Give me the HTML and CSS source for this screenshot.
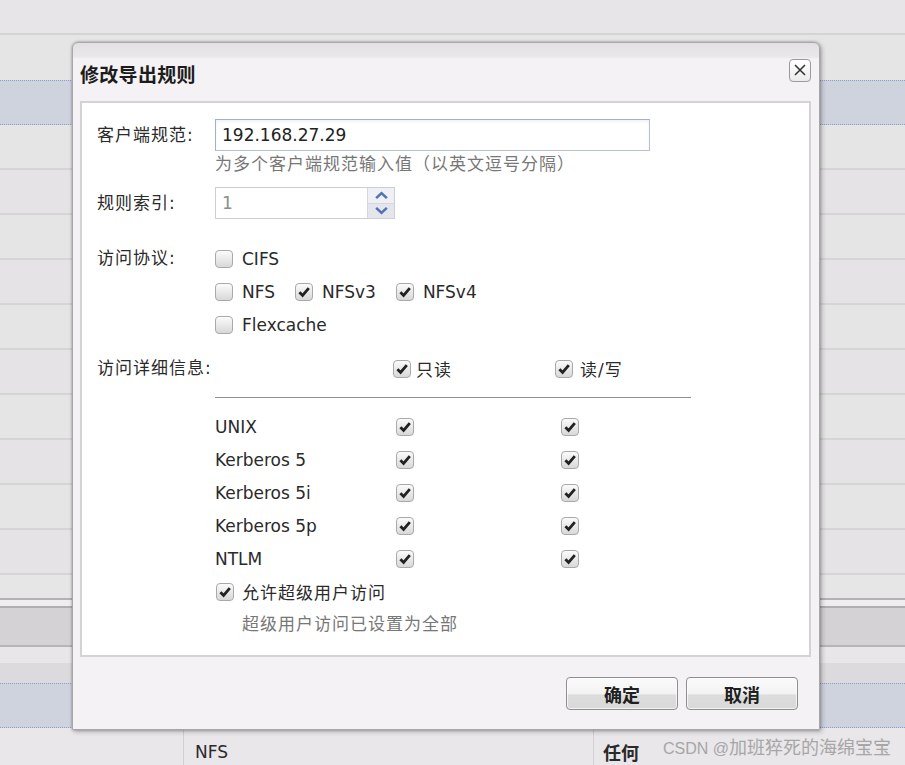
FILE: index.html
```html
<!DOCTYPE html>
<html lang="zh-CN">
<head>
<meta charset="utf-8">
<title>修改导出规则</title>
<link rel="stylesheet" href="styles.css">
</head>
<body>
<div class="bg">
  <div class="bg-head"></div>
  <div class="bg-row first"></div>
  <div class="bg-row sel"></div>
  <div class="bg-row"></div>
  <div class="bg-row alt"></div>
  <div class="bg-row"></div>
  <div class="bg-row alt"></div>
  <div class="bg-row"></div>
  <div class="bg-row alt"></div>
  <div class="bg-row"></div>
  <div class="bg-row alt"></div>
  <div class="bg-row"></div>
  <div class="bg-row alt"></div>
  <div class="bg-part"></div>
  <div class="bg-strip"></div>
  <div class="bg-tool"></div>
  <div class="bg-a"></div>
  <div class="bg-b"></div>
  <div class="bg-row sel"></div>
  <div class="bg-foot">
    <div class="c1"></div>
    <div class="c2">NFS</div>
    <div class="c3">任何</div>
  </div>
</div>

<div class="dialog">
  <div class="dlg-title">
    <h1>修改导出规则</h1>
    <span class="close"><svg viewBox="0 0 22 22"><path d="M5.5 5.5L16.5 16.5M16.5 5.5L5.5 16.5"/></svg></span>
  </div>
  <div class="panel">
    <div class="frow client">
      <div class="lbl">客户端规范:</div>
      <div class="ctl">
        <div class="text-in">192.168.27.29</div>
        <div class="hint">为多个客户端规范输入值（以英文逗号分隔）</div>
      </div>
    </div>
    <div class="frow idx">
      <div class="lbl">规则索引:</div>
      <div class="spin">
        <div class="spin-in">1</div>
        <div class="spin-btns">
          <span class="up"><svg viewBox="0 0 14 10"><path d="M2 7.5L7 2.8L12 7.5"/></svg></span>
          <span class="dn"><svg viewBox="0 0 14 10"><path d="M2 2.5L7 7.2L12 2.5"/></svg></span>
        </div>
      </div>
    </div>
    <div class="frow proto">
      <div class="lbl">访问协议:</div>
      <div class="ctl">
        <div class="cbline"><span class="chk"><span class="cb"></span>CIFS</span></div>
        <div class="cbline">
          <span class="chk"><span class="cb"></span>NFS</span>
          <span class="chk"><span class="cb"><svg viewBox="0 0 14 14"><path d="M2.4 7.2L5.6 10.4L11.8 3.2"/></svg></span>NFSv3</span>
          <span class="chk"><span class="cb"><svg viewBox="0 0 14 14"><path d="M2.4 7.2L5.6 10.4L11.8 3.2"/></svg></span>NFSv4</span>
        </div>
        <div class="cbline"><span class="chk"><span class="cb"></span>Flexcache</span></div>
      </div>
    </div>
    <div class="frow detail">
      <div class="lbl">访问详细信息:</div>
      <div></div>
      <span class="chk ro"><span class="cb"><svg viewBox="0 0 14 14"><path d="M2.4 7.2L5.6 10.4L11.8 3.2"/></svg></span><span class="zh">只读</span></span>
      <span class="chk rw"><span class="cb"><svg viewBox="0 0 14 14"><path d="M2.4 7.2L5.6 10.4L11.8 3.2"/></svg></span><span class="zh">读/写</span></span>
    </div>
    <div class="rule"></div>
    <div class="auth">
      <div class="arow"><span>UNIX</span><span class="cb"><svg viewBox="0 0 14 14"><path d="M2.4 7.2L5.6 10.4L11.8 3.2"/></svg></span><span class="cb"><svg viewBox="0 0 14 14"><path d="M2.4 7.2L5.6 10.4L11.8 3.2"/></svg></span></div>
      <div class="arow"><span>Kerberos 5</span><span class="cb"><svg viewBox="0 0 14 14"><path d="M2.4 7.2L5.6 10.4L11.8 3.2"/></svg></span><span class="cb"><svg viewBox="0 0 14 14"><path d="M2.4 7.2L5.6 10.4L11.8 3.2"/></svg></span></div>
      <div class="arow"><span>Kerberos 5i</span><span class="cb"><svg viewBox="0 0 14 14"><path d="M2.4 7.2L5.6 10.4L11.8 3.2"/></svg></span><span class="cb"><svg viewBox="0 0 14 14"><path d="M2.4 7.2L5.6 10.4L11.8 3.2"/></svg></span></div>
      <div class="arow"><span>Kerberos 5p</span><span class="cb"><svg viewBox="0 0 14 14"><path d="M2.4 7.2L5.6 10.4L11.8 3.2"/></svg></span><span class="cb"><svg viewBox="0 0 14 14"><path d="M2.4 7.2L5.6 10.4L11.8 3.2"/></svg></span></div>
      <div class="arow"><span>NTLM</span><span class="cb"><svg viewBox="0 0 14 14"><path d="M2.4 7.2L5.6 10.4L11.8 3.2"/></svg></span><span class="cb"><svg viewBox="0 0 14 14"><path d="M2.4 7.2L5.6 10.4L11.8 3.2"/></svg></span></div>
    </div>
    <div class="su">
      <span class="chk"><span class="cb"><svg viewBox="0 0 14 14"><path d="M2.4 7.2L5.6 10.4L11.8 3.2"/></svg></span><span class="zh">允许超级用户访问</span></span>
      <div class="hint">超级用户访问已设置为全部</div>
    </div>
  </div>
  <div class="dlg-foot">
    <span class="btn">确定</span>
    <span class="btn">取消</span>
  </div>
</div>

<div class="wm">CSDN @<span>加班猝死的海绵宝宝</span></div>
</body>
</html>
```
FILE: styles.css
```css
* { box-sizing: border-box; margin: 0; padding: 0; }
html, body { width: 905px; height: 765px; overflow: hidden; }
body {
  position: relative;
  background: #e7e5e7;
  font-family: "DejaVu Sans", "Noto Sans CJK SC", sans-serif;
  font-size: 17px;
  color: #2a2a2a;
}

/* background page */
.bg-head { height: 35px; background: #e8e5e8; border-bottom: 2px solid #d5d4d5; }
.bg-row { height: 45px; background: #e6e5e6; border-bottom: 2px solid #d6d5d6; }
.bg-row.alt { background: #e6e3e6; }
.bg-row.first { border-bottom: none; }
.bg-row.sel { background: #cfd3de; border-top: 1px dotted #8c9ed0; border-bottom: 1px dotted #8c9ed0; }
.bg-part { height: 25px; background: #e7e6e7; border-bottom: 2px solid #b3b2b3; }
.bg-strip { height: 8px; background: #efedef; border-bottom: 2px solid #b0afb0; }
.bg-tool { height: 39px; background: #d4d2d4; border-bottom: 2px solid #b7b6b7; }
.bg-a { height: 16px; background: #e8e6e8; }
.bg-b { height: 20px; background: #dcdadd; }
.bg-foot { height: 37px; background: #e9e7e9; display: flex; }
.bg-foot .c1 { width: 184px; border-right: 1px solid #d2d0d2; }
.bg-foot .c2 { width: 410px; border-right: 1px solid #d2d0d2; padding: 13px 0 0 11px; line-height: 22px; }
.bg-foot .c3 { padding: 13px 0 0 9px; line-height: 22px; font-family: "Noto Sans CJK SC", sans-serif; font-weight: bold; font-size: 18px; }

/* dialog */
.dialog {
  position: absolute;
  left: 72px;
  top: 42px;
  width: 748px;
  height: 688px;
  border: 1px solid #a9a7a9;
  border-radius: 6px 6px 0 0;
  background: linear-gradient(#e2e0e3, #eae8eb 14px, #f5f2f5 16px, #f5f2f5);
  box-shadow: 0 0 3px rgba(0,0,0,.35), 2px 2px 5px rgba(0,0,0,.22);
  padding: 0 8px 0 7px;
  display: flex;
  flex-direction: column;
}
.dlg-title {
  height: 58px;
  flex: none;
  display: flex;
  align-items: center;
  justify-content: space-between;
}
.dlg-title h1 {
  font-family: "Noto Sans CJK SC", sans-serif;
  font-size: 19px;
  font-weight: bold;
  letter-spacing: 0.3px;
  color: #1c1c1c;
  margin-top: 3px;
}
.close {
  width: 22px;
  height: 23px;
  margin-top: -4px;
  border: 1px solid #9b9b9b;
  border-radius: 4px;
  background: linear-gradient(#ffffff, #ebebeb);
  display: flex;
  align-items: center;
  justify-content: center;
}
.close svg { width: 20px; height: 20px; }
.close path { fill: none; stroke: #333; stroke-width: 1.7; }

.panel {
  height: 556px;
  flex: none;
  background: #fff;
  border: 2px solid #d4d2d4;
  padding: 16px 0 0 15px;
}
.frow { display: flex; }
.lbl { width: 118px; flex: none; letter-spacing: 1px; line-height: 33px; }
.client .lbl { line-height: 32px; }
.text-in {
  width: 435px;
  height: 32px;
  border: 1px solid #b7bfd4;
  border-top-color: #a3aec8;
  border-left-color: #a3aec8;
  box-shadow: inset 0 2px 3px rgba(0,0,0,.05);
  padding-left: 6px;
  line-height: 30px;
  color: #222;
}
.hint { line-height: 26px; color: #777; letter-spacing: 1px; }

.idx { margin-top: 10px; }
.idx .lbl { line-height: 32px; }
.spin { display: flex; width: 180px; height: 32px; border: 1px solid #cbcfd9; }
.spin-in { flex: 1; padding-left: 6px; line-height: 30px; color: #8e8e8e; border-right: 1px solid #d5d8e1; }
.spin-btns { width: 26px; display: flex; flex-direction: column; }
.spin-btns span { flex: 1; display: flex; align-items: center; justify-content: center; background: #eef0f5; }
.spin-btns .dn { background: #e5e6eb; border-top: 1px solid #d5d8e1; }
.spin-btns svg { width: 15px; height: 11px; }
.spin-btns path { fill: none; stroke: #4f73b3; stroke-width: 2.4; }

.proto { margin-top: 23px; }
.cbline { height: 33px; display: flex; align-items: center; gap: 20px; }
.chk { display: inline-flex; align-items: center; gap: 9px; height: 33px; }
.cb {
  width: 18px;
  height: 18px;
  flex: none;
  border: 1px solid #a9a9a9;
  border-radius: 4px;
  background: linear-gradient(#fbfbfb, #d8d8d8);
  display: inline-flex;
  align-items: center;
  justify-content: center;
}
.cb svg { width: 14px; height: 14px; }
.cb path { fill: none; stroke: #222; stroke-width: 2.8; }
.zh { letter-spacing: 1px; }

.detail {
  display: grid;
  grid-template-columns: 118px 178px 162px auto;
  align-items: center;
  height: 33px;
  margin-top: 11px;
}
.detail .chk.ro { gap: 5px; }
.detail .chk.rw { gap: 7px; }

.rule { margin: 12px 0 0 118px; width: 476px; height: 1px; background: #8f8f8f; }

.auth { margin-top: 12px; padding-left: 118px; }
.arow { display: grid; grid-template-columns: 181px 165px 18px; align-items: center; height: 33px; }

.su { padding-left: 119px; }
.su .chk { gap: 8px; }
.su .hint { padding-left: 26px; line-height: 32px; }

.dlg-foot {
  flex: 1;
  display: flex;
  justify-content: flex-end;
  gap: 8px;
  padding: 20px 13px 0 0;
}
.btn {
  width: 112px;
  height: 33px;
  border: 1px solid #8e8e8e;
  border-radius: 4px;
  background: linear-gradient(#fbfbfb 0%, #f2f2f2 52%, #dcdcdc 54%, #d9d9d9 100%);
  box-shadow: inset 0 0 0 1px rgba(255,255,255,.7);
  font-family: "Noto Sans CJK SC", sans-serif;
  font-weight: bold;
  font-size: 18px;
  color: #202020;
  display: flex;
  align-items: center;
  justify-content: center;
}

/* watermark */
.wm {
  position: absolute;
  left: 663px;
  top: 734px;
  font-family: "Liberation Sans", "Noto Sans CJK SC", sans-serif;
  font-size: 16px;
  line-height: 24px;
  color: #a6a6a6;
}
.wm span { font-size: 18px; font-family: "Noto Sans CJK SC", sans-serif; }
```
